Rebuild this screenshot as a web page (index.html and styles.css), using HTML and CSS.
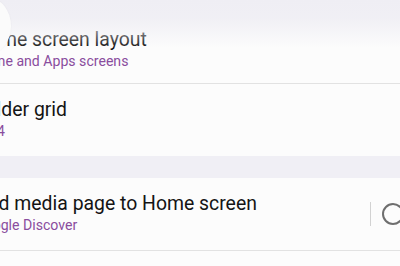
FILE: index.html
```
<!DOCTYPE html>
<html>
    <head>
        <meta http-equiv="Content-Type" content="text/html; charset=utf-8"/>
        <link rel="stylesheet" href="styles.css">
    </head>
    <body>
        <div class="screen">
            <div class="card first">
                <div class="row top">
                    <div class="txt">
                        <div class="title">Home screen layout</div>
                        <div class="sub">Home and Apps screens</div>
                    </div>
                </div>
                <div class="row">
                    <div class="txt">
                        <div class="title">Folder grid</div>
                        <div class="sub">4 x 4</div>
                    </div>
                </div>
                <div class="fade"></div>
                <div class="blob"></div>
            </div>

            <div class="card">
                <div class="row">
                    <div class="txt">
                        <div class="title">Add media page to Home screen</div>
                        <div class="sub">Google Discover</div>
                    </div>
                    <div class="vline"></div>
                    <div class="switch"><div class="thumb"></div></div>
                </div>
                <div class="row empty"></div>
            </div>
        </div>
    </body>
</html>
```

FILE: styles.css
```
html, body {
    margin: 0;
    padding: 0;
}

body {
    width: 400px;
    height: 266px;
    overflow: hidden;
    background-color: #f0eff5;
    font-family: Roboto, "Noto Sans", sans-serif;
}

.screen {
    width: 459px;
    margin-left: -25px;
}

.card {
    position: relative;
    background-color: #fcfcfc;
}

.first {
    margin-bottom: 22px;
}

.row {
    display: flex;
    align-items: center;
    padding: 14px 0 15px 0;
    border-bottom: 1px solid #e2e2e2;
}

.row:last-of-type {
    border-bottom: none;
}

.first .row:nth-child(2) {
    border-bottom: none;
}

.row.top {
    padding: 28px 0 12px 0;
    align-items: flex-start;
}

.row.empty {
    height: 20px;
    padding: 0;
}

.txt {
    flex: 1;
}

.title {
    font-size: 19.4px;
    line-height: 24px;
    color: #141414;
}

.sub {
    font-size: 14.1px;
    line-height: 19px;
    color: #8a4d9e;
}

.vline {
    width: 1px;
    height: 24px;
    background-color: #d2d2d2;
    margin-right: 11px;
}

.switch {
    width: 52px;
    height: 22px;
    display: flex;
}

.thumb {
    width: 18px;
    height: 18px;
    border: 2px solid #6e6e6e;
    border-radius: 50%;
}

/* app bar fading over the first card */
.fade {
    position: absolute;
    left: 0;
    right: 0;
    top: 0;
    height: 48px;
    background: linear-gradient(to bottom, rgba(239,238,244,1) 0px, rgba(239,238,244,0.9) 18px, rgba(239,238,244,0.55) 30px, rgba(239,238,244,0) 48px);
    pointer-events: none;
}

.blob {
    position: absolute;
    left: -8px;
    top: -2px;
    width: 44px;
    height: 56px;
    border-radius: 50%;
    background-color: #fbfbfb;
    box-shadow: 0 0 2px rgba(0,0,0,0.05);
}
```
